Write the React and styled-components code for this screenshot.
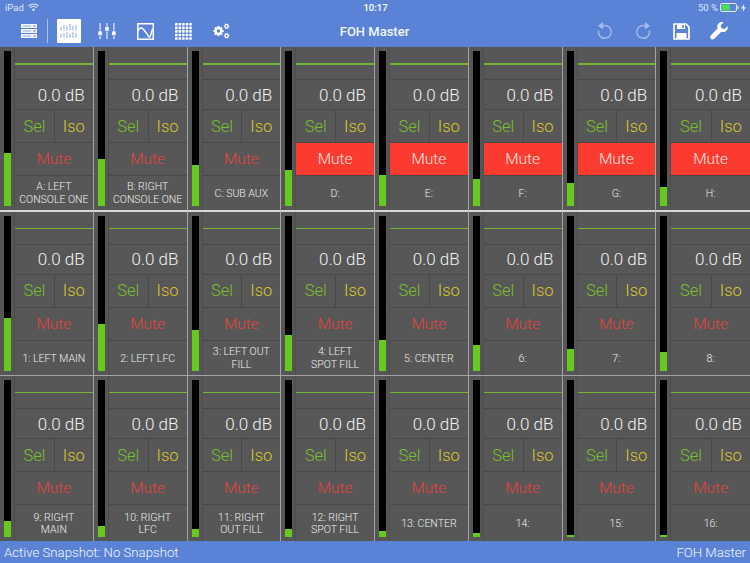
import React from 'react'
import styled, { createGlobalStyle } from 'styled-components'

const GlobalStyle = createGlobalStyle`
  html, body { margin: 0; padding: 0; background: #5a83d6; }
  body { font-family: "Roboto", "Liberation Sans", sans-serif; }
`

const Page = styled.div`
  width: 750px;
  height: 563px;
  display: flex;
  flex-direction: column;
  overflow: hidden;
  background: #5a83d6;
  color: #fff;
`

const StatusBar = styled.div`
  height: 15px;
  padding: 0 4px 0 5px;
  display: grid;
  grid-template-columns: 1fr auto 1fr;
  align-items: center;
  font-size: 9.5px;
  color: #dfe7f8;
`

const StatusLeft = styled.div`
  display: flex;
  align-items: center;
  gap: 4px;
`

const StatusRight = styled.div`
  display: flex;
  align-items: center;
  justify-content: flex-end;
  gap: 2px;
`

const Clock = styled.div`
  font-weight: 500;
  color: #fff;
`

const Toolbar = styled.div`
  height: 32px;
  padding: 0 12px 0 11px;
  display: grid;
  grid-template-columns: 1fr auto 1fr;
  align-items: center;
`

const ToolGroup = styled.div`
  display: flex;
  align-items: center;
  justify-content: ${p => (p.$end ? 'flex-end' : 'flex-start')};
`

const ToolButton = styled.div`
  width: ${p => (p.$narrow ? 36 : 38)}px;
  height: 32px;
  display: flex;
  align-items: center;
  justify-content: center;
  opacity: ${p => (p.$dim ? 0.45 : 1)};
`

const ActiveBox = styled.div`
  width: 24px;
  height: 24px;
  border-radius: 1px;
  background: #fff;
  display: flex;
  align-items: center;
  justify-content: center;
`

const Divider = styled.div`
  width: 1px;
  height: 24px;
  margin-right: 2px;
  background: #a9c0ec;
`

const Title = styled.div`
  font-size: 13px;
  font-weight: 500;
  color: #f2f5fc;
`

const Board = styled.div`
  flex: 1;
  display: grid;
  grid-template-columns: repeat(8, 1fr);
  grid-template-rows: repeat(3, 1fr);
  background: #565656;
`

const Strip = styled.div`
  display: flex;
  min-width: 0;
  border-right: ${p => (p.$last ? 'none' : '1px solid #a3a3a3')};
  border-bottom: ${p => (p.$rowEnd === 0 ? '2px solid #d8d8d8' : p.$rowEnd === 1 ? '1px solid #a3a3a3' : 'none')};
`

const MeterSlot = styled.div`
  width: 14px;
  flex-shrink: 0;
  padding: 4px 3px 4px 4px;
  box-sizing: border-box;
  display: flex;
`

const MeterTrack = styled.div`
  flex: 1;
  background: #000;
  display: flex;
  flex-direction: column;
  justify-content: flex-end;
`

const MeterFill = styled.div`
  background: #66c91e;
`

const Body = styled.div`
  flex: 1;
  min-width: 0;
  display: flex;
  flex-direction: column;
  background: #575757;
  border-left: 1px solid #4c4c4c;
`

const FaderCell = styled.div`
  height: 32px;
  padding-top: 16px;
  box-sizing: content-box;
  height: 16px;
  flex-shrink: 0;
  border-bottom: 1px solid #484848;
`

const FaderLine = styled.div`
  height: ${p => (p.$thick ? 2 : 1)}px;
  background: #74b632;
`

const GainCell = styled.div`
  height: 29px;
  flex-shrink: 0;
  display: flex;
  align-items: center;
  justify-content: flex-end;
  padding-right: 8px;
  font-size: 17px;
  font-weight: 300;
  color: #f2f2f2;
  border-bottom: 1px solid #484848;
`

const PairRow = styled.div`
  height: 32px;
  flex-shrink: 0;
  display: grid;
  grid-template-columns: 1fr 1fr;
  border-bottom: 1px solid #484848;
`

const Toggle = styled.div`
  display: flex;
  align-items: center;
  justify-content: center;
  font-size: 16.5px;
  font-weight: 300;
  color: ${p => p.$color};
  border-left: ${p => (p.$split ? '1px solid #484848' : 'none')};
`

const MuteButton = styled.div`
  height: 32px;
  flex-shrink: 0;
  display: flex;
  align-items: center;
  justify-content: center;
  font-size: 15.5px;
  font-weight: 300;
  color: ${p => (p.$on ? '#fbe6e2' : '#e5443e')};
  background: ${p => (p.$on ? '#fc3b30' : 'transparent')};
  border-bottom: 1px solid #484848;
`

const Label = styled.div`
  flex: 1;
  display: flex;
  align-items: center;
  justify-content: center;
  padding-top: 2px;
  text-align: center;
  font-size: 10.5px;
  line-height: 12.5px;
  font-weight: 300;
  color: #f0f0f0;
`

const LabelLine = styled.div`
  white-space: nowrap;
`

const Footer = styled.div`
  height: 22px;
  padding: 0 4px;
  display: flex;
  align-items: center;
  justify-content: space-between;
  font-size: 13.2px;
  font-weight: 300;
  color: #f2f5fc;
`

const ServerIcon = () => (
  <svg width='16' height='16' viewBox='0 0 16 16' fill='#fff'>
    <path d='M0 1h16v4H0zM0 6h16v4H0zM0 11h16v4H0z' opacity='.92' />
    <path d='M2 2.5h8v1H2zM2 7.5h8v1H2zM2 12.5h8v1H2z' fill='#8fabe4' />
    <path d='M12.5 2.5h2v1h-2zM12.5 7.5h2v1h-2zM12.5 12.5h2v1h-2z' fill='#46659f' />
  </svg>
)

const MixerIcon = () => (
  <svg width='18' height='16' viewBox='0 0 18 16' fill='none' stroke='#7294dc' strokeWidth='1.1' strokeDasharray='1.2 .5'>
    {[1, 4, 7, 10, 13, 16].map((x, i) => (
      <g key={x}>
        <line x1={x} x2={x} y1={[4, 2, 3, 1, 3, 2][i]} y2='7.5' />
        <line x1={x} x2={x} y1={[11, 10, 9.5, 11, 9.5, 10][i]} y2='15' />
      </g>
    ))}
  </svg>
)

const SlidersIcon = () => (
  <svg width='18' height='18' viewBox='0 0 18 18' fill='#fff'>
    <rect x='1.6' y='1' width='1' height='7.5' />
    <rect x='1.6' y='14' width='1' height='3' />
    <rect x='8.5' y='1' width='1' height='3' />
    <rect x='8.5' y='9.5' width='1' height='7.5' />
    <rect x='15.4' y='1' width='1' height='7.5' />
    <rect x='15.4' y='14' width='1' height='3' />
    <rect x='.3' y='9.3' width='3.6' height='4' rx='.5' />
    <rect x='7.2' y='4.8' width='3.6' height='4' rx='.5' />
    <rect x='14.1' y='9.3' width='3.6' height='4' rx='.5' />
  </svg>
)

const CurveIcon = () => (
  <svg width='17' height='17' viewBox='0 0 17 17' fill='none' stroke='#fff'>
    <rect x='.75' y='.75' width='15.5' height='15.5' strokeWidth='1.5' />
    <path d='M1 8 C3 3.5 5 4 7 7 S10 10 11.5 13.5 C12.5 15.5 13.5 13 15.5 6' strokeWidth='1.4' />
  </svg>
)

const DotsIcon = () => (
  <svg width='17' height='17' viewBox='0 0 17 17' fill='#fff'>
    {[0, 1, 2, 3, 4].flatMap(r => [0, 1, 2, 3, 4].map(c => (
      <rect key={`${r}-${c}`} x={c * 3.55} y={r * 3.55} width='2.6' height='2.6' rx='.4' />
    )))}
  </svg>
)

const Gear = ({ cx, cy, r, teeth, w }) => (
  <g>
    <circle cx={cx} cy={cy} r={r} fill='none' stroke='#fff' strokeWidth={w} />
    {Array.from({ length: teeth }).map((_, i) => {
      const a = (i * 2 * Math.PI) / teeth
      return (
        <line
          key={i}
          x1={cx + Math.cos(a) * r}
          y1={cy + Math.sin(a) * r}
          x2={cx + Math.cos(a) * (r + w)}
          y2={cy + Math.sin(a) * (r + w)}
          stroke='#fff'
          strokeWidth={w * 0.9}
        />
      )
    })}
  </g>
)

const GearsIcon = () => (
  <svg width='17' height='16' viewBox='0 0 17 16'>
    <Gear cx={5.5} cy={8} r={2.8} teeth={8} w={2.3} />
    <Gear cx={13.6} cy={3.2} r={1.6} teeth={6} w={1.2} />
    <Gear cx={13.6} cy={12.8} r={1.6} teeth={6} w={1.2} />
  </svg>
)

const UndoIcon = ({ flip }) => (
  <svg width='16' height='18' viewBox='0 0 16 18' fill='none' style={flip ? { transform: 'scaleX(-1)' } : undefined}>
    <path d='M5 4.2 A6.4 6.4 0 1 1 1.6 8.5' stroke='#fff' strokeWidth='1.5' />
    <path d='M6 0 L6 7.6 L1 3.8 Z' fill='#fff' />
  </svg>
)

const SaveIcon = () => (
  <svg width='17' height='17' viewBox='0 0 17 17' fill='none'>
    <path d='M1 1h12l3 3v12H1z' stroke='#fff' strokeWidth='1.7' strokeLinejoin='round' />
    <path d='M4 1h8v5H4z' fill='#fff' />
    <path d='M9.2 2h1.6v3H9.2z' fill='#5a83d6' />
    <path d='M3.5 10h10v6h-10z' fill='#fff' />
  </svg>
)

const WrenchIcon = () => (
  <svg width='18' height='18' viewBox='0 0 18 18' fill='#fff'>
    <path d='M17.6 4.3 14.6 7l-3.2-.8-.8-3L13.5.4C11.2-.4 8.8.5 7.8 2.5c-.6 1.2-.6 2.5-.1 3.7L.8 13.4c-.9 1-.9 2.4 0 3.4.9.9 2.4 1 3.4 0l7.1-7c1.3.5 2.8.4 4-.3 2-1.1 2.9-3.5 2.3-5.2z' />
  </svg>
)

const WifiIcon = () => (
  <svg width='11' height='9' viewBox='0 0 11 9' fill='none' stroke='#dfe7f8' strokeWidth='1.2'>
    <path d='M.6 3a7 7 0 0 1 9.8 0M2.2 4.8a4.7 4.7 0 0 1 6.6 0' />
    <path d='M5.5 8.4 3.9 6.5a2.3 2.3 0 0 1 3.2 0z' fill='#dfe7f8' stroke='none' />
  </svg>
)

const BatteryIcon = () => (
  <svg width='19' height='9' viewBox='0 0 19 9'>
    <rect x='.5' y='.5' width='16' height='8' rx='1.5' fill='none' stroke='#dfe7f8' />
    <rect x='1.5' y='1.5' width='8.5' height='6' fill='#4cd964' />
    <rect x='17.4' y='3' width='1.2' height='3' fill='#dfe7f8' />
  </svg>
)

const BoltIcon = () => (
  <svg width='5' height='8' viewBox='0 0 5 8' fill='#dfe7f8'>
    <path d='M3 0 0 4.6h2L1.6 8 5 3.2H3z' />
  </svg>
)

const channels = [
  ['A: LEFT\nCONSOLE ONE', 53, false], ['B: RIGHT\nCONSOLE ONE', 47, false], ['C: SUB AUX', 41, false], ['D:', 36, true],
  ['E:', 31, true], ['F:', 27, true], ['G:', 23, true], ['H:', 19, true],
  ['1: LEFT MAIN', 53, false], ['2: LEFT LFC', 47, false], ['3: LEFT OUT\nFILL', 41, false], ['4: LEFT\nSPOT FILL', 36, false],
  ['5: CENTER', 31, false], ['6:', 26, false], ['7:', 22, false], ['8:', 19, false],
  ['9: RIGHT\nMAIN', 16, false], ['10: RIGHT\nLFC', 11, false], ['11: RIGHT\nOUT FILL', 8, false], ['12: RIGHT\nSPOT FILL', 8, false],
  ['13: CENTER', 6, false], ['14:', 4, false], ['15:', 2, false], ['16:', 2, false]
]

function Channel ({ name, level, muted, index }) {
  const row = Math.floor(index / 8)
  return (
    <Strip $last={index % 8 === 7} $rowEnd={row}>
      <MeterSlot>
        <MeterTrack>
          <MeterFill style={{ height: level }} />
        </MeterTrack>
      </MeterSlot>
      <Body>
        <FaderCell><FaderLine $thick={row === 0} /></FaderCell>
        <GainCell>0.0 dB</GainCell>
        <PairRow>
          <Toggle $color='#78c02e'>Sel</Toggle>
          <Toggle $color='#dcc82c' $split>Iso</Toggle>
        </PairRow>
        <MuteButton $on={muted}>Mute</MuteButton>
        <Label>
          <div>
            {name.split('\n').map(line => <LabelLine key={line}>{line}</LabelLine>)}
          </div>
        </Label>
      </Body>
    </Strip>
  )
}

export default function App () {
  return (
    <Page>
      <GlobalStyle />
      <StatusBar>
        <StatusLeft>iPad <WifiIcon /></StatusLeft>
        <Clock>10:17</Clock>
        <StatusRight>50 % <BatteryIcon /><BoltIcon /></StatusRight>
      </StatusBar>
      <Toolbar>
        <ToolGroup>
          <ToolButton $narrow><ServerIcon /></ToolButton>
          <Divider />
          <ToolButton><ActiveBox><MixerIcon /></ActiveBox></ToolButton>
          <ToolButton><SlidersIcon /></ToolButton>
          <ToolButton><CurveIcon /></ToolButton>
          <ToolButton><DotsIcon /></ToolButton>
          <ToolButton><GearsIcon /></ToolButton>
        </ToolGroup>
        <Title>FOH Master</Title>
        <ToolGroup $end>
          <ToolButton $dim><UndoIcon /></ToolButton>
          <ToolButton $dim><UndoIcon flip /></ToolButton>
          <ToolButton><SaveIcon /></ToolButton>
          <ToolButton><WrenchIcon /></ToolButton>
        </ToolGroup>
      </Toolbar>
      <Board>
        {channels.map(([name, level, muted], i) => (
          <Channel key={name} name={name} level={level} muted={muted} index={i} />
        ))}
      </Board>
      <Footer>
        <span>Active Snapshot: No Snapshot</span>
        <span>FOH Master</span>
      </Footer>
    </Page>
  )
}
